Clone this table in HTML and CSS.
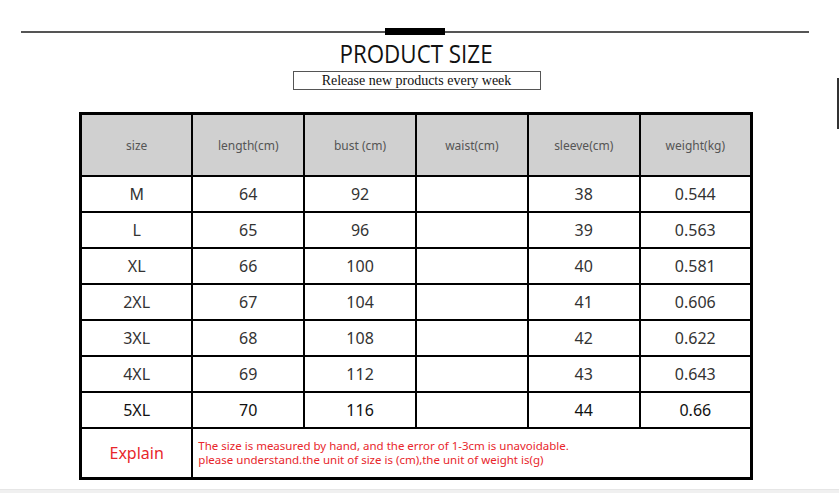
FILE: index.html
```html
<!DOCTYPE html>
<html>
<head>
<meta charset="utf-8">
<link rel="stylesheet" href="styles.css">
</head>
<body>
<div class="page">
  <div class="rule"><span class="line"></span><span class="bar"></span><span class="line"></span></div>
  <h1 class="title"><span>PRODUCT SIZE</span></h1>
  <div class="sub-wrap"><div class="sub">Release new products every week</div></div>
  <table class="sizes">
    <thead>
      <tr><th>size</th><th>length(cm)</th><th>bust (cm)</th><th>waist(cm)</th><th>sleeve(cm)</th><th>weight(kg)</th></tr>
    </thead>
    <tbody>
      <tr><td>M</td><td>64</td><td>92</td><td></td><td>38</td><td>0.544</td></tr>
      <tr><td>L</td><td>65</td><td>96</td><td></td><td>39</td><td>0.563</td></tr>
      <tr><td>XL</td><td>66</td><td>100</td><td></td><td>40</td><td>0.581</td></tr>
      <tr><td>2XL</td><td>67</td><td>104</td><td></td><td>41</td><td>0.606</td></tr>
      <tr><td>3XL</td><td>68</td><td>108</td><td></td><td>42</td><td>0.622</td></tr>
      <tr><td>4XL</td><td>69</td><td>112</td><td></td><td>43</td><td>0.643</td></tr>
      <tr class="dark"><td>5XL</td><td>70</td><td>116</td><td></td><td>44</td><td>0.66</td></tr>
      <tr class="explain"><td class="ex-label">Explain</td><td colspan="5" class="ex-text"><div class="ex-line">The size is measured by hand, and the error of 1-3cm is unavoidable.</div><div class="ex-line">please understand.the unit of size is (cm),the unit of weight is(g)</div></td></tr>
    </tbody>
  </table>
  <div class="footer-strip"></div>
  <span class="edge-mark"></span>
</div>
</body>
</html>
```
FILE: styles.css
```css
html, body {
  margin: 0;
  padding: 0;
  background: #fff;
}
.page {
  position: relative;
  width: 839px;
  height: 493px;
  overflow: hidden;
  display: flex;
  flex-direction: column;
  font-family: "Noto Sans", "DejaVu Sans", sans-serif;
}
.rule {
  display: flex;
  align-items: center;
  width: 788px;
  height: 7px;
  margin: 28px 0 0 21px;
}
.rule .line {
  flex: 1;
  height: 2px;
  background: #555;
}
.rule .bar {
  width: 60px;
  height: 7px;
  background: #000;
}
.title {
  margin: 0;
  height: 36px;
  text-align: center;
  font-family: "Open Sans", "Noto Sans", sans-serif;
  font-weight: 400;
  font-size: 26px;
  line-height: 36px;
  color: #111;
  padding-right: 6px;
}
.title span {
  display: inline-block;
  transform: scaleX(0.86);
}
.sub-wrap {
  display: flex;
  justify-content: center;
  padding-right: 6px;
}
.sub {
  width: 246px;
  height: 17px;
  border: 1px solid #555;
  text-align: center;
  font-family: "Liberation Serif", serif;
  font-size: 14px;
  line-height: 17px;
  color: #111;
}
.sizes {
  margin: 22px 0 0 79px;
  width: 674px;
  border-collapse: collapse;
  border: 3px solid #000;
  table-layout: fixed;
}
.sizes th, .sizes td {
  border: 2px solid #000;
  text-align: center;
  padding: 0;
}
.sizes th {
  height: 60px;
  background: #d0d0d0;
  font-weight: 400;
  font-size: 12px;
  color: #555;
}
.sizes td {
  height: 34px;
  font-size: 16px;
  color: #333;
}
.sizes tr.dark td {
  color: #111;
}
.sizes td.ex-label {
  height: 48px;
  color: #e8262b;
  font-size: 16px;
}
.sizes td.ex-text {
  text-align: left;
  padding-left: 5px;
  color: #e8262b;
  font-size: 11.5px;
}
.ex-line {
  height: 14px;
  line-height: 14px;
  white-space: nowrap;
}
.footer-strip {
  margin-top: 9px;
  height: 4px;
  background: #f0f0f0;
  border-top: 1px solid #e6e6e6;
}
.edge-mark {
  position: absolute;
  left: 837px;
  top: 78px;
  width: 3px;
  height: 51px;
  background: #333;
}
```
